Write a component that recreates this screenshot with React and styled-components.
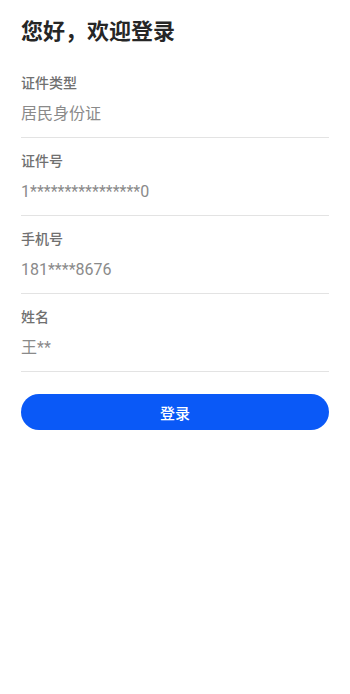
import React from "react";
import styled, { createGlobalStyle } from "styled-components";

const Global = createGlobalStyle`
  html, body { margin: 0; padding: 0; background: #ffffff; }
  body { font-family: Roboto, "Noto Sans CJK SC", "Noto Sans", sans-serif; }
  * { box-sizing: border-box; }
`;

const Page = styled.div`
  min-height: 694px;
  padding: 17px 21px 0 21px;
  display: flex;
  flex-direction: column;
  background: #ffffff;
`;

const Title = styled.h1`
  margin: 0 0 13px 0;
  font-size: 22px;
  line-height: 30px;
  font-weight: 700;
  color: #262626;
`;

const Field = styled.div`
  display: flex;
  flex-direction: column;
  gap: 10px;
  padding: 13px 0 12px 0;
  border-bottom: 1px solid #e3e3e3;
`;

const Label = styled.div`
  font-size: 14px;
  line-height: 20px;
  font-weight: 500;
  color: #707070;
`;

const Value = styled.div`
  font-size: 16px;
  line-height: 22px;
  font-weight: 400;
  color: #8a8a8a;
`;

const LoginButton = styled.button`
  margin-top: 22px;
  height: 36px;
  width: 100%;
  border: none;
  border-radius: 18px;
  background: #0a59f7;
  color: #ffffff;
  font-family: inherit;
  font-size: 15px;
  font-weight: 500;
  cursor: pointer;
`;

const fields = [
  { label: "证件类型", value: "居民身份证" },
  { label: "证件号", value: "1****************0" },
  { label: "手机号", value: "181****8676" },
  { label: "姓名", value: "王**" },
];

export default function App() {
  return (
    <>
      <Global />
      <Page>
        <Title>您好，欢迎登录</Title>
        {fields.map((f) => (
          <Field key={f.label}>
            <Label>{f.label}</Label>
            <Value>{f.value}</Value>
          </Field>
        ))}
        <LoginButton>登录</LoginButton>
      </Page>
    </>
  );
}
